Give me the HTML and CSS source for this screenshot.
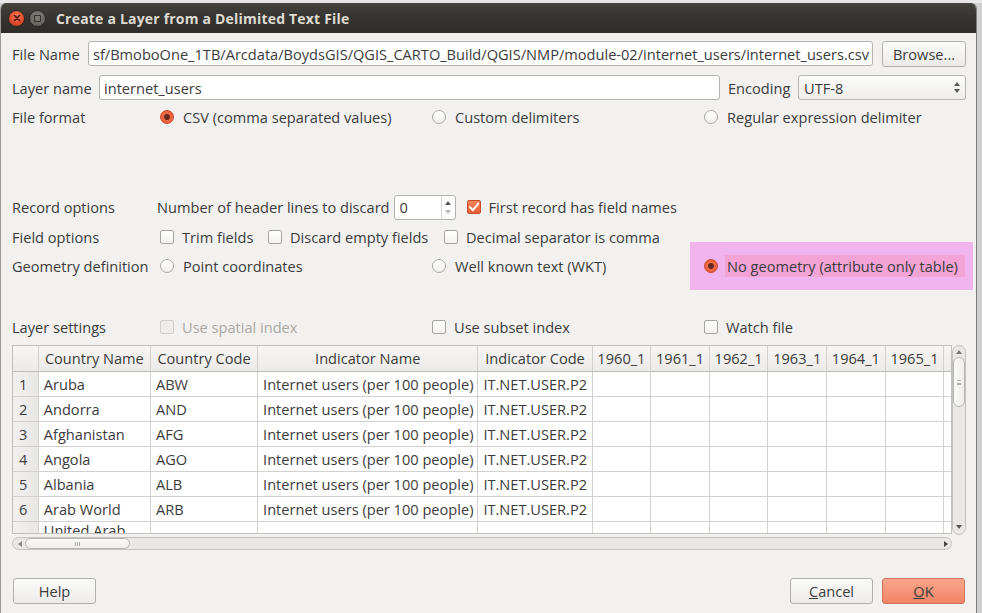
FILE: index.html
```html
<!DOCTYPE html>
<html>
<head>
<meta charset="utf-8">
<link rel="stylesheet" href="styles.css">
</head>
<body>
<div class="desk"></div>
<div class="window">
  <div class="titlebar">
    <span class="wbtn close"><svg viewBox="0 0 8 8" width="8" height="8"><path d="M1.5 1.5 L6.5 6.5 M6.5 1.5 L1.5 6.5" stroke="#4a160a" stroke-width="1.6" stroke-linecap="round"/></svg></span>
    <span class="wbtn max"><span class="sq"></span></span>
    <span class="title">Create a Layer from a Delimited Text File</span>
  </div>
  <div class="content">
    <div class="row row-file">
      <span class="lbl lbl-file">File Name</span>
      <div class="input input-file"><span class="shift">sf/BmoboOne_1TB/Arcdata/BoydsGIS/QGIS_CARTO_Build/QGIS/NMP/module-02/internet_users/internet_users.csv</span></div>
      <button class="btn btn-browse">Browse...</button>
    </div>
    <div class="row row-name">
      <span class="lbl lbl-name">Layer name</span>
      <div class="input input-name">internet_users</div>
      <span class="lbl lbl-enc">Encoding</span>
      <div class="select">UTF-8<span class="arrows"><span class="tri up"></span><span class="tri down"></span></span></div>
    </div>
    <div class="grid4 row-format">
      <span class="lbl">File format</span>
      <span class="opt"><span class="radio on"></span>CSV (comma separated values)</span>
      <span class="opt"><span class="radio"></span>Custom delimiters</span>
      <span class="opt"><span class="radio"></span>Regular expression delimiter</span>
    </div>
    <div class="row row-record">
      <span class="lbl lbl-opt">Record options</span>
      <span class="txt">Number of header lines to discard</span>
      <div class="spin"><span class="spinval">0</span><span class="spinarr"><span class="tri up"></span><span class="tri down dim"></span></span></div>
      <span class="opt opt-first"><span class="check on"><svg viewBox="0 0 14 14" width="14" height="14"><path d="M3 7.2 L6 10.2 L11.2 3.6" fill="none" stroke="#fff" stroke-width="2" stroke-linecap="round" stroke-linejoin="round"/></svg></span>First record has field names</span>
    </div>
    <div class="row row-field">
      <span class="lbl lbl-fo">Field options</span>
      <span class="opt o-trim"><span class="check"></span>Trim fields</span>
      <span class="opt o-disc"><span class="check"></span>Discard empty fields</span>
      <span class="opt"><span class="check"></span>Decimal separator is comma</span>
    </div>
    <div class="grid4 row-geom">
      <span class="lbl">Geometry definition</span>
      <span class="opt"><span class="radio"></span>Point coordinates</span>
      <span class="opt"><span class="radio"></span>Well known text (WKT)</span>
      <div class="pink"><span class="opt"><span class="radio on"></span><span class="hl">No geometry (attribute only table)</span></span></div>
    </div>
    <div class="grid4 row-layer">
      <span class="lbl">Layer settings</span>
      <span class="opt disabled"><span class="check"></span>Use spatial index</span>
      <span class="opt"><span class="check"></span>Use subset index</span>
      <span class="opt"><span class="check"></span>Watch file</span>
    </div>
    <div class="tablebox">
      <div class="tablerow">
        <div class="viewport">
          <table class="data">
            <colgroup>
              <col class="c0"><col class="c1"><col class="c2"><col class="c3"><col class="c4">
              <col class="cy"><col class="cy"><col class="cy"><col class="cy"><col class="cy"><col class="cy"><col class="cy">
            </colgroup>
            <thead>
              <tr><th class="corner"></th><th>Country Name</th><th>Country Code</th><th>Indicator Name</th><th>Indicator Code</th><th>1960_1</th><th>1961_1</th><th>1962_1</th><th>1963_1</th><th>1964_1</th><th>1965_1</th><th></th></tr>
            </thead>
            <tbody>
              <tr><th>1</th><td>Aruba</td><td>ABW</td><td>Internet users (per 100 people)</td><td>IT.NET.USER.P2</td><td></td><td></td><td></td><td></td><td></td><td></td><td></td></tr>
              <tr><th>2</th><td>Andorra</td><td>AND</td><td>Internet users (per 100 people)</td><td>IT.NET.USER.P2</td><td></td><td></td><td></td><td></td><td></td><td></td><td></td></tr>
              <tr><th>3</th><td>Afghanistan</td><td>AFG</td><td>Internet users (per 100 people)</td><td>IT.NET.USER.P2</td><td></td><td></td><td></td><td></td><td></td><td></td><td></td></tr>
              <tr><th>4</th><td>Angola</td><td>AGO</td><td>Internet users (per 100 people)</td><td>IT.NET.USER.P2</td><td></td><td></td><td></td><td></td><td></td><td></td><td></td></tr>
              <tr><th>5</th><td>Albania</td><td>ALB</td><td>Internet users (per 100 people)</td><td>IT.NET.USER.P2</td><td></td><td></td><td></td><td></td><td></td><td></td><td></td></tr>
              <tr><th>6</th><td>Arab World</td><td>ARB</td><td>Internet users (per 100 people)</td><td>IT.NET.USER.P2</td><td></td><td></td><td></td><td></td><td></td><td></td><td></td></tr>
              <tr class="tall"><th></th><td class="wrap">United Arab Emirates</td><td></td><td></td><td></td><td></td><td></td><td></td><td></td><td></td><td></td><td></td></tr>
            </tbody>
          </table>
        </div>
        <div class="vscroll">
          <span class="tri up sm"></span>
          <div class="vthumb"><span class="hgrip"></span></div>
          <div class="vfill"></div>
          <span class="tri down sm"></span>
        </div>
      </div>
      <div class="hscroll">
        <span class="tri left"></span>
        <div class="hthumb"><span class="vgrip"></span></div>
        <div class="hfill"></div>
        <span class="tri right"></span>
      </div>
    </div>
    <div class="buttons">
      <button class="btn btn-dlg">Help</button>
      <span class="spacer"></span>
      <button class="btn btn-dlg"><u>C</u>ancel</button>
      <button class="btn btn-dlg btn-ok"><u>O</u>K</button>
    </div>
  </div>
</div>
</body>
</html>
```
FILE: styles.css
```css
* { box-sizing: border-box; }
html, body { margin: 0; padding: 0; }
body {
  width: 982px;
  height: 613px;
  overflow: hidden;
  background: #cfcfcf;
  font-family: "Open Sans", "Noto Sans", sans-serif;
  font-size: 14.6px;
  color: #3c3c3c;
}
.desk {
  height: 3px;
  background: #e8e8e8;
}
.window {
  width: 977px;
  height: 610px;
  background: #f2f1f0;
  border-left: 1px solid #9a9a9a;
  border-right: 1px solid #7f7f7f;
  border-radius: 6px 6px 0 0;
  overflow: hidden;
}
.titlebar {
  height: 30px;
  background: linear-gradient(#44433e, #373632 40%, #2d2c28);
  display: flex;
  align-items: center;
  padding-left: 7px;
}
.wbtn {
  width: 17px;
  height: 17px;
  border-radius: 50%;
  display: inline-flex;
  align-items: center;
  justify-content: center;
  margin-right: 4px;
}
.close {
  background: radial-gradient(circle at 50% 35%, #f27b5c, #e0482a 60%, #b83418);
  border: 1px solid #2a2926;
}
.max {
  background: radial-gradient(circle at 50% 35%, #7f7e79, #5c5b56);
  border: 1px solid #2a2926;
}
.sq {
  width: 7px;
  height: 7px;
  border: 1px solid #2e2d29;
  border-radius: 1px;
}
.title {
  margin-left: 6px;
  font-weight: bold;
  color: #dfdbd2;
  font-size: 14px;
  letter-spacing: 0.2px;
}
.content {
  padding: 8px 0 0 11px;
  display: flex;
  flex-direction: column;
}
.row {
  display: flex;
  align-items: center;
}
.lbl { color: #3c3c3c; white-space: nowrap; }
.row-file { height: 25px; }
.lbl-file { width: 76px; }
.input {
  height: 25px;
  background: #fff;
  border: 1px solid #b4b4b0;
  border-radius: 3px;
  padding: 0 4px;
  display: flex;
  align-items: center;
  overflow: hidden;
  white-space: nowrap;
}
.input-file { width: 785px; padding: 0; justify-content: flex-end; }
.shift { padding-right: 3px; }
.btn {
  font: inherit;
  color: #3c3c3c;
  height: 26px;
  border: 1px solid #b0afab;
  border-radius: 3px;
  background: linear-gradient(#fbfbfa, #ecebe9);
  padding: 0;
}
.btn-browse { width: 84px; margin-left: 9px; }
.row-name { height: 25px; margin-top: 9px; }
.lbl-name { width: 87px; }
.input-name { width: 621px; }
.lbl-enc { margin-left: 8px; width: 70px; }
.select {
  width: 168px;
  height: 25px;
  border: 1px solid #b4b4b0;
  border-radius: 3px;
  background: linear-gradient(#fcfcfb, #efeeec);
  display: flex;
  align-items: center;
  padding-left: 5px;
}
.arrows {
  margin-left: auto;
  margin-right: 5px;
  display: flex;
  flex-direction: column;
  gap: 3px;
}
.tri {
  width: 0;
  height: 0;
  display: block;
  border-left: 3px solid transparent;
  border-right: 3px solid transparent;
}
.tri.up { border-bottom: 4px solid #555; }
.tri.down { border-top: 4px solid #555; }
.tri.dim { border-top-color: #b5b5b5; }
.tri.left {
  border: none;
  border-top: 3px solid transparent;
  border-bottom: 3px solid transparent;
  border-right: 4px solid #888;
}
.tri.right {
  border: none;
  border-top: 3px solid transparent;
  border-bottom: 3px solid transparent;
  border-left: 4px solid #444;
}
.tri.sm.up { border-bottom-color: #777; margin-top: 4px; }
.tri.sm.down { border-top-color: #555; margin-bottom: 5px; }
.grid4 {
  display: grid;
  grid-template-columns: 148px 272px 272px 1fr;
  align-items: center;
}
.opt {
  display: flex;
  align-items: center;
  white-space: nowrap;
}
.radio {
  width: 14px;
  height: 14px;
  border-radius: 50%;
  border: 1px solid #a9a8a4;
  background: linear-gradient(#ffffff, #f1f0ee);
  margin-right: 9px;
  flex: none;
}
.radio.on {
  border: 1px solid #c5492a;
  background: radial-gradient(circle, #5a2a1c 0, #6b2d1d 2.6px, #ef6a45 3.4px, #f0643c 5px, #e8573a 7px);
}
.check {
  width: 14px;
  height: 14px;
  border-radius: 2px;
  border: 1px solid #a6a5a1;
  background: linear-gradient(#ffffff, #f3f2f0);
  margin-right: 8px;
  flex: none;
  display: inline-flex;
}
.check.on {
  background: linear-gradient(#f4845a, #ea6035);
  border-color: #c84c2c;
}
.check.on svg { margin: -1px; }
.row-format { height: 20px; margin-top: 7px; }
.row-record { height: 24px; margin-top: 68px; }
.lbl-opt { width: 145px; }
.txt { white-space: nowrap; }
.spin {
  width: 62px;
  height: 25px;
  margin-left: 4px;
  background: #fff;
  border: 1px solid #b4b4b0;
  border-radius: 3px;
  display: flex;
  align-items: center;
}
.spinval { padding-left: 5px; flex: 1; }
.spinarr {
  width: 14px;
  height: 100%;
  border-left: 1px solid #d8d8d6;
  display: flex;
  flex-direction: column;
  justify-content: center;
  align-items: center;
  gap: 5px;
}
.opt-first { margin-left: 11px; }
.row-field { height: 20px; margin-top: 8px; }
.lbl-fo { width: 148px; }
.o-trim { width: 108px; }
.o-disc { width: 176px; }
.row-geom { height: 38px; }
.pink {
  margin: -5px 0 -5px -14px;
  width: 283px;
  height: 48px;
  background: #f2b4ee;
  display: flex;
  align-items: center;
  padding-left: 14px;
}
.hl {
  background: #f3a3d6;
  padding: 1px 2px;
  margin-left: -2px;
  width: 240px;
}
.row-layer { height: 20px; margin-top: 32px; }
.disabled { color: #a9a8a5; }
.disabled .check { background: #eeedeb; border-color: #cfceca; }
.tablebox {
  margin-top: 8px;
  width: 954px;
  height: 205px;
  display: flex;
  flex-direction: column;
}
.tablerow { display: flex; height: 189px; }
.viewport {
  width: 940px;
  height: 189px;
  overflow: hidden;
  border: 1px solid #c0bfbc;
  background: #fff;
}
.data {
  border-collapse: collapse;
  table-layout: fixed;
  width: 990px;
}
.c0 { width: 25px; }
.c1 { width: 111px; }
.c2 { width: 106px; }
.c3 { width: 218px; }
.c4 { width: 113px; }
.cy { width: 58px; }
.data th, .data td {
  height: 25px;
  padding: 0 0 0 5px;
  border: 1px solid #d2d1ce;
  white-space: nowrap;
  overflow: hidden;
  font-weight: normal;
  text-align: left;
}
.data thead th {
  text-align: center;
  padding: 0;
  background: linear-gradient(#f7f6f5, #ebeae8);
  border-top: none;
  border-bottom: 1px solid #bebdba;
  color: #3c3c3c;
}
.data thead th.corner { border-left: none; }
.data tbody th {
  background: linear-gradient(90deg, #f1f0ef, #e8e7e5);
  padding-left: 6px;
  border-left: none;
}
.data tr.tall th, .data tr.tall td { height: 36px; }
.data td.wrap { white-space: normal; line-height: 17px; }
.vscroll {
  width: 14px;
  height: 190px;
  border: 1px solid #c3c2bf;
  border-radius: 7px;
  background: #e9e8e6;
  display: flex;
  flex-direction: column;
  align-items: center;
}
.vthumb {
  width: 12px;
  height: 50px;
  margin-top: 3px;
  border: 1px solid #b6b5b2;
  border-radius: 6px;
  background: linear-gradient(90deg, #fafaf9, #eeedeb);
  display: flex;
  align-items: center;
  justify-content: center;
}
.hgrip {
  width: 4px;
  height: 5px;
  border-top: 1px solid #b0b0b0;
  border-bottom: 1px solid #b0b0b0;
  background: linear-gradient(transparent 1.5px, #b0b0b0 1.5px, #b0b0b0 2.5px, transparent 2.5px);
}
.vfill { flex: 1; }
.hscroll {
  margin-top: 3px;
  width: 940px;
  height: 13px;
  border: 1px solid #c3c2bf;
  border-radius: 7px;
  background: #e9e8e6;
  display: flex;
  align-items: center;
  padding: 0 3px 0 5px;
}
.hthumb {
  width: 105px;
  height: 11px;
  margin-left: 3px;
  border: 1px solid #b6b5b2;
  border-radius: 6px;
  background: linear-gradient(#fafaf9, #eeedeb);
  display: flex;
  align-items: center;
  justify-content: center;
}
.vgrip {
  width: 5px;
  height: 4px;
  border-left: 1px solid #b0b0b0;
  border-right: 1px solid #b0b0b0;
  background: linear-gradient(90deg, transparent 1.5px, #b0b0b0 1.5px, #b0b0b0 2.5px, transparent 2.5px);
}
.hfill { flex: 1; }
.buttons {
  margin-top: 28px;
  width: 953px;
  display: flex;
  align-items: center;
  padding-left: 1px;
}
.spacer { flex: 1; }
.btn-dlg { width: 83px; height: 26px; margin-left: 9px; }
.buttons .btn-dlg:first-child { margin-left: 0; }
.btn-ok {
  background: linear-gradient(#f9a58b, #f28466);
  border-color: #cf735a;
}
```
